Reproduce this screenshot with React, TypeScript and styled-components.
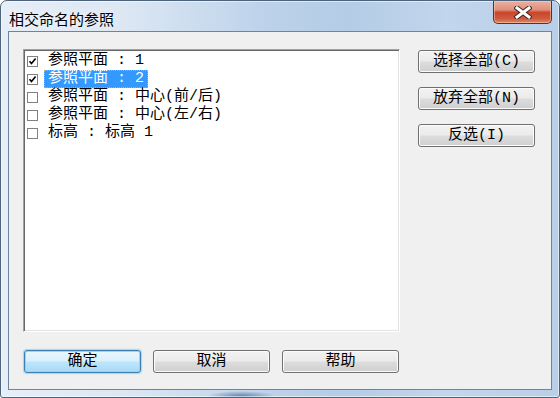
import React from 'react';
import styled, { createGlobalStyle } from 'styled-components';

const GlobalStyle = createGlobalStyle`
    html, body {
        margin: 0;
        padding: 0;
        width: 560px;
        height: 398px;
        overflow: hidden;
        background: #ffffff;
    }
`

const UI_FONT = `"Liberation Mono", "Noto Sans CJK SC", monospace`;

const Window = styled.div`
    box-sizing: border-box;
    width: 560px;
    height: 398px;
    display: flex;
    flex-direction: column;
    border: 1px solid #4d637b;
    border-radius: 7px 7px 3px 3px;
    background:
        radial-gradient(ellipse 34px 5px at 240px 395px, rgba(70, 105, 145, 0.75), rgba(70, 105, 145, 0)),
        linear-gradient(90deg, #e6eef8 0%, #dce7f3 22%, #bcd2ea 48%, #b4cce6 62%, #c2d6ec 80%, #b7cfe8 100%);
    box-shadow: inset 0 0 0 1px rgba(255, 255, 255, 0.55);
`

const TitleBar = styled.div`
    height: 30px;
    display: flex;
    justify-content: space-between;
    align-items: flex-start;
    padding: 0 7px 0 8px;
`

const Title = styled.div`
    margin-top: 9px;
    font-family: "Noto Sans CJK SC", sans-serif;
    font-size: 15px;
    line-height: 18px;
    color: #000;
    text-shadow: 0 0 8px rgba(255, 255, 255, 0.9);
`

const CloseButton = styled.div`
    width: 59px;
    height: 23px;
    box-sizing: border-box;
    display: flex;
    align-items: center;
    justify-content: center;
    border: 1px solid #6b2a1e;
    border-top: none;
    border-radius: 0 0 5px 5px;
    background: linear-gradient(#eab0a0 0%, #e0907b 40%, #c8472d 52%, #d05a3f 80%, #e08a66 100%);
    box-shadow: inset 0 0 0 1px rgba(255, 220, 200, 0.45);
`

const Client = styled.div`
    flex: 1;
    margin: 0 7px 7px 7px;
    box-sizing: border-box;
    border: 1px solid #6f849c;
    background: #f0f0f0;
    padding: 17px 0 0 14px;
    display: flex;
    flex-direction: column;
    font-family: ${UI_FONT};
    font-size: 15px;
    color: #000;
`

const TopRow = styled.div`
    display: flex;
    gap: 18px;
`

const ListBox = styled.div`
    box-sizing: border-box;
    width: 377px;
    height: 283px;
    background: #ffffff;
    border: 1px solid;
    border-color: #a0a0a0 #ffffff #ffffff #a0a0a0;
    box-shadow: inset 1px 1px 0 #696969, inset -1px -1px 0 #e3e3e3;
    padding: 2px 0 0 2px;
`

const Row = styled.div`
    height: 18px;
    display: flex;
    align-items: center;
    padding-left: 1px;
`

const Label = styled.span<{ $selected?: boolean }>`
    margin-left: 6px;
    padding: 0 4px;
    height: 18px;
    line-height: 18px;
    white-space: pre;
    background: ${p => (p.$selected ? '#3399ff' : 'transparent')};
    color: ${p => (p.$selected ? '#ffffff' : '#000000')};
    outline: ${p => (p.$selected ? '1px dotted #f0a040' : 'none')};
    outline-offset: -1px;
`

const ButtonColumn = styled.div`
    display: flex;
    flex-direction: column;
    gap: 14px;
    margin-top: 1px;
`

const BottomRow = styled.div`
    display: flex;
    gap: 12px;
    margin-top: 18px;
    margin-left: 1px;
`

const Button = styled.div<{ $default?: boolean }>`
    box-sizing: border-box;
    width: 117px;
    height: 23px;
    display: flex;
    align-items: center;
    justify-content: center;
    white-space: pre;
    line-height: 18px;
    border-radius: 3px;
    border: 1px solid ${p => (p.$default ? '#3c7fb1' : '#707070')};
    background: ${p =>
        p.$default
            ? 'linear-gradient(#eaf6fd 0%, #d9f0fc 48%, #bee6fd 52%, #a7d9f5 100%)'
            : 'linear-gradient(#f2f2f2 0%, #ebebeb 48%, #dddddd 52%, #cfcfcf 100%)'};
    box-shadow: ${p =>
        p.$default
            ? 'inset 0 0 0 1px #92d6f8, 0 0 1px 1px rgba(90, 190, 240, 0.5)'
            : 'inset 0 0 0 1px #fcfcfc'};
`

const CheckBox = ({ checked }: { checked: boolean }) => (
    <svg width="11" height="11" viewBox="0 0 11 11">
        <rect x="0.5" y="0.5" width="10" height="10" fill="#fff" stroke="#808080" />
        {checked && <path d="M2.5 5.2 L4.5 7.6 L8.6 2.6" fill="none" stroke="#000" strokeWidth="1.6" />}
    </svg>
)

const CloseGlyph = () => (
    <svg width="18" height="13" viewBox="0 0 18 13">
        <path d="M3 2 L15 11 M15 2 L3 11" stroke="#3a2a28" strokeWidth="5" strokeLinecap="square" />
        <path d="M3 2 L15 11 M15 2 L3 11" stroke="#ffffff" strokeWidth="3" strokeLinecap="square" />
    </svg>
)

const items = [
    { text: '参照平面 : 1', checked: true },
    { text: '参照平面 : 2', checked: true, selected: true },
    { text: '参照平面 : 中心(前/后)', checked: false },
    { text: '参照平面 : 中心(左/右)', checked: false },
    { text: '标高 : 标高 1', checked: false },
]

const App = () => {
    return (
        <>
            <GlobalStyle />
            <Window>
                <TitleBar>
                    <Title>相交命名的参照</Title>
                    <CloseButton>
                        <CloseGlyph />
                    </CloseButton>
                </TitleBar>
                <Client>
                    <TopRow>
                        <ListBox>
                            {items.map(item => (
                                <Row key={item.text}>
                                    <CheckBox checked={item.checked} />
                                    <Label $selected={item.selected}>{item.text}</Label>
                                </Row>
                            ))}
                        </ListBox>
                        <ButtonColumn>
                            <Button>选择全部(C)</Button>
                            <Button>放弃全部(N)</Button>
                            <Button>反选(I)</Button>
                        </ButtonColumn>
                    </TopRow>
                    <BottomRow>
                        <Button $default>确定</Button>
                        <Button>取消</Button>
                        <Button>帮助</Button>
                    </BottomRow>
                </Client>
            </Window>
        </>
    );
};

export default App;
